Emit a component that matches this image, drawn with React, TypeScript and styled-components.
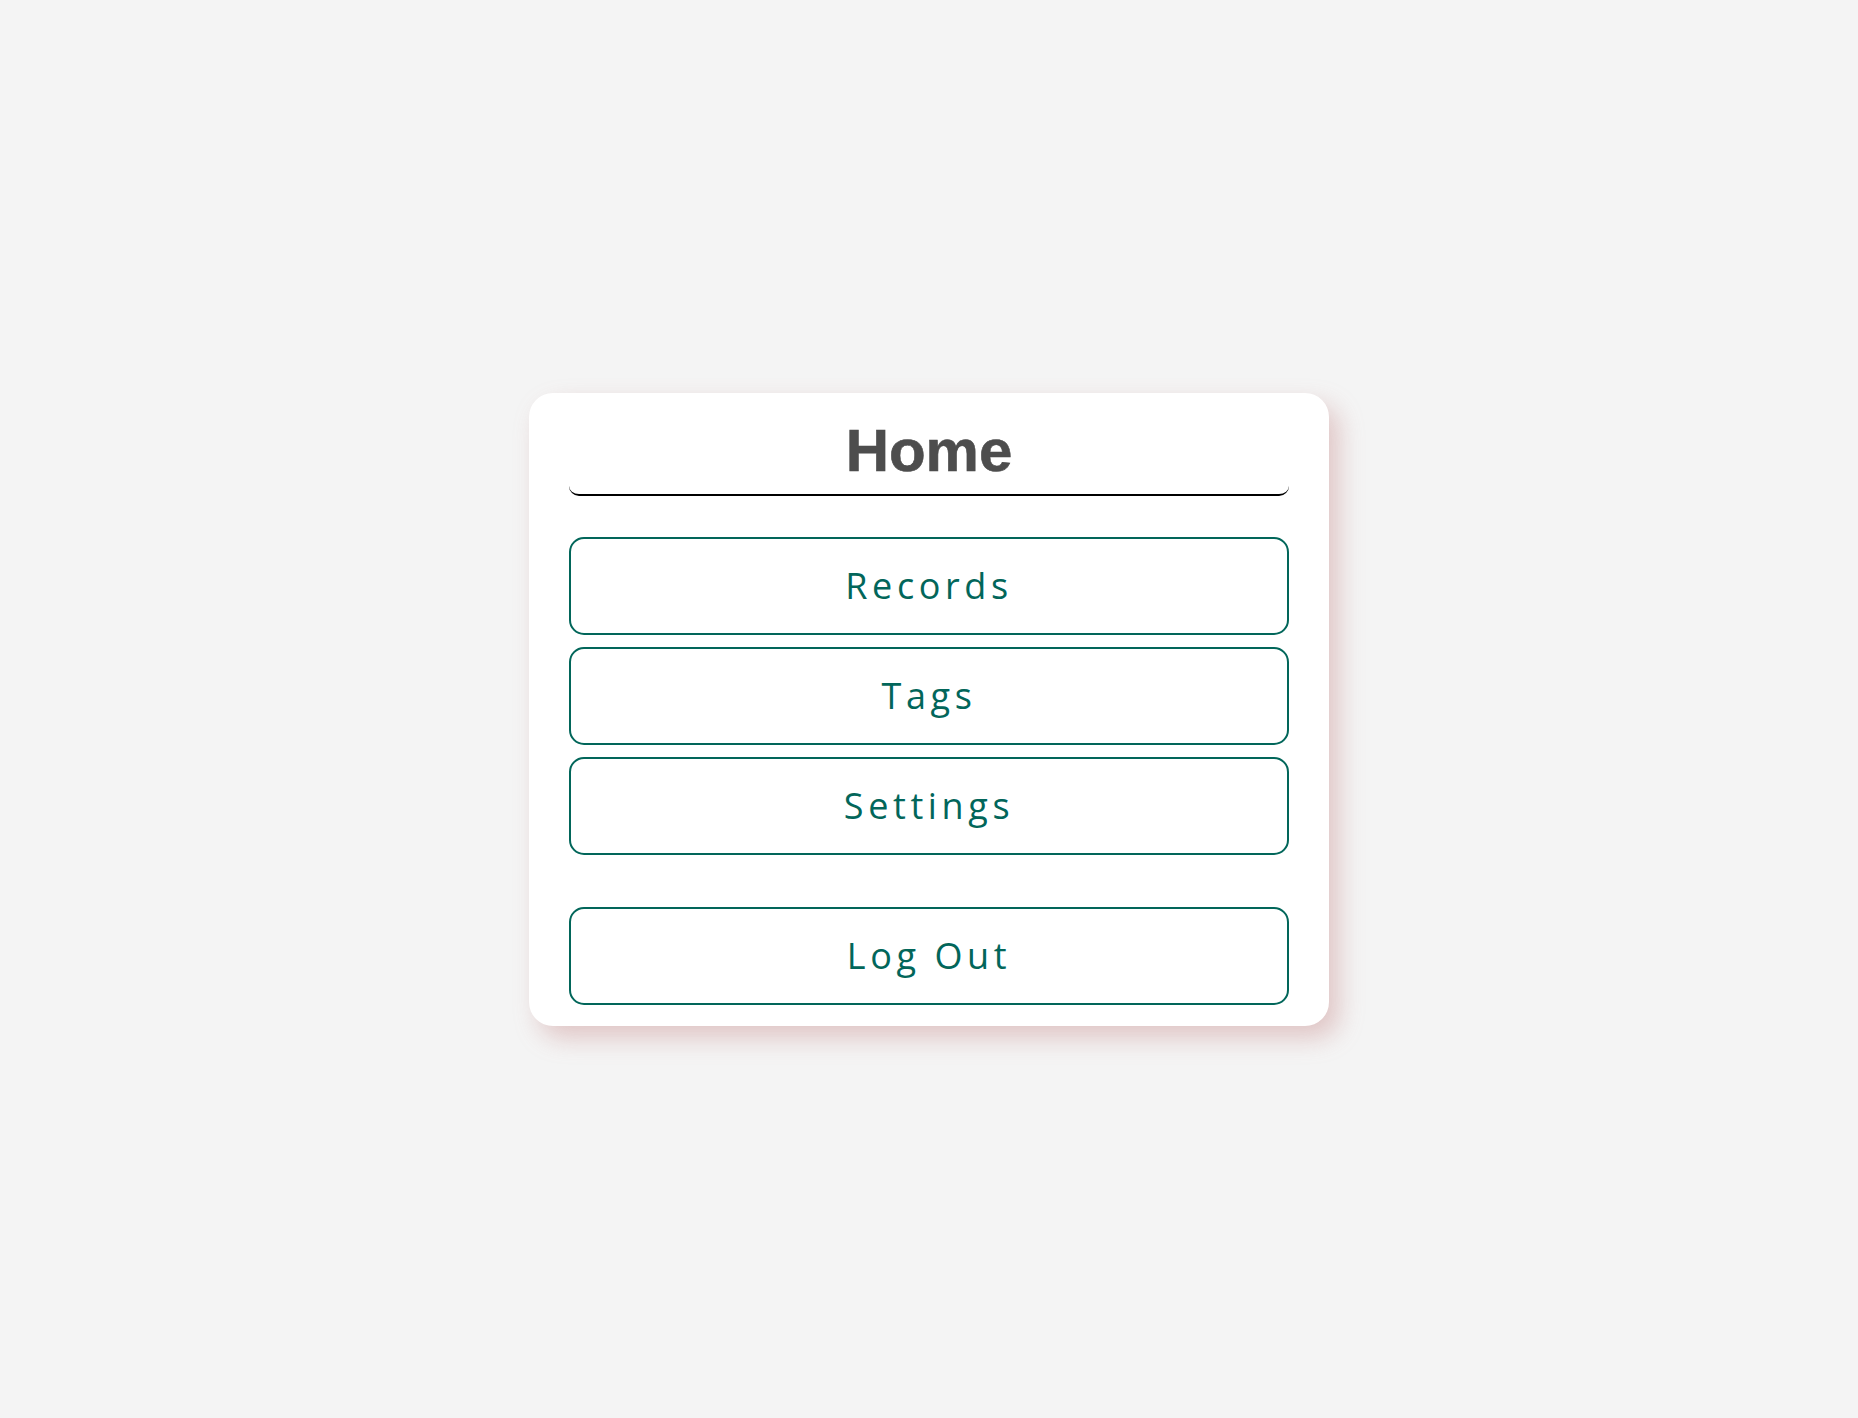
import * as React from "react";
import styled, { createGlobalStyle } from "styled-components";

const GlobalStyle = createGlobalStyle`
    html, body {
        margin: 0;
        padding: 0;
        background: #f4f4f4;
    }

    * {
        box-sizing: border-box;
    }
`;

const Page = styled.div`
    display: flex;
    align-items: center;
    justify-content: center;
    min-height: 100vh;
`;

const Card = styled.div`
    display: flex;
    flex-direction: column;
    width: 800px;
    padding: 20px 40px 21px;
    background: #ffffff;
    border-radius: 24px;
    box-shadow: 10px 12px 24px rgba(195, 130, 130, 0.4);
`;

const Header = styled.div`
    height: 83px;
    padding-bottom: 4px;
    border-bottom: 2px solid #000000;
    border-radius: 0 0 10px 10px;
`;

const Title = styled.h1`
    margin: 0;
    font-family: "Liberation Sans", Arial, sans-serif;
    font-size: 60px;
    font-weight: 700;
    line-height: 76px;
    text-align: center;
    color: #4d4d4d;
    -webkit-text-stroke: 0.6px #4d4d4d;
`;

const Menu = styled.nav`
    display: flex;
    flex-direction: column;
    gap: 12px;
    margin-top: 41px;
`;

const MenuButton = styled.button<{ $separated?: boolean }>`
    height: 98px;
    margin-top: ${props => (props.$separated ? "40px" : "0")};
    padding: 0;
    background: #ffffff;
    border: 2px solid #02665a;
    border-radius: 15px;
    font-family: "Open Sans", sans-serif;
    font-size: 36px;
    font-weight: 400;
    letter-spacing: 4.6px;
    color: #02665a;
    cursor: pointer;
`;

const items = ["Records", "Tags", "Settings"];

export default function App(): React.JSX.Element {
    return (
        <>
            <GlobalStyle />
            <Page>
                <Card>
                    <Header>
                        <Title>Home</Title>
                    </Header>
                    <Menu>
                        {items.map(x => (
                            <MenuButton key={x}>{x}</MenuButton>
                        ))}
                        <MenuButton $separated>Log Out</MenuButton>
                    </Menu>
                </Card>
            </Page>
        </>
    );
}
